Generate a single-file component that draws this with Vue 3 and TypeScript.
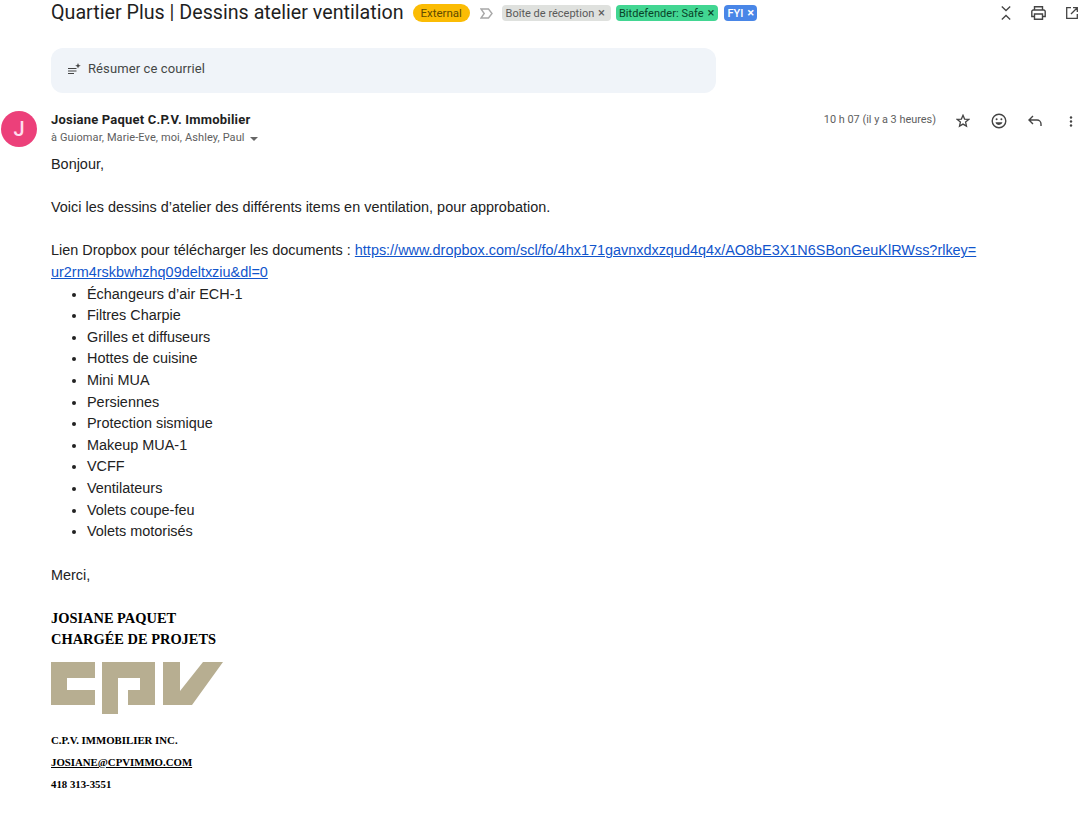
<script setup lang="ts">
const items: string[] = [
  'Échangeurs d’air ECH-1', 'Filtres Charpie', 'Grilles et diffuseurs', 'Hottes de cuisine',
  'Mini MUA', 'Persiennes', 'Protection sismique', 'Makeup MUA-1', 'VCFF', 'Ventilateurs',
  'Volets coupe-feu', 'Volets motorisés',
]
</script>

<template>
  <div class="page">
    <header class="subject-row">
      <h1 class="subject">Quartier Plus | Dessins atelier ventilation</h1>
      <span class="external">External</span>
      <svg class="imp" width="13" height="11" viewBox="0 0 13 11"><path d="M1 1h7.500l3.500 4.500L8.500 10H1l3.200-4.500z" fill="none" stroke="#a8a8a8" stroke-width="1.400"/></svg>
      <span class="tag grey">Boîte de réception <i>×</i></span>
      <span class="tag green">Bitdefender: Safe <i>×</i></span>
      <span class="tag blue">FYI <i>×</i></span>
      <div class="top-icons">
        <span class="tbox"><svg width="10" height="14" viewBox="0 0 10 14"><path d="M.8.500L5 4.500 9.200.500M.8 13.500L5 9.500l4.200 4" fill="none" stroke="#444" stroke-width="1.300"/></svg></span>
        <span class="tbox"><svg width="15" height="14" viewBox="0 0 15 14"><path d="M3.500 4V.8h8V4M3.500 10.500H.8V5.500A1.500 1.500 0 0 1 2.300 4h10.400a1.500 1.500 0 0 1 1.500 1.500v5h-2.700M3.500 8h8v5.200h-8z" fill="none" stroke="#444" stroke-width="1.400"/></svg></span>
        <span class="tbox"><svg width="12" height="12" viewBox="0 0 12 12"><path d="M5 .7H.7v10.600h10.600V7M7 .7h4.300V5M11.300.7L5 7" fill="none" stroke="#444" stroke-width="1.300"/></svg></span>
      </div>
    </header>

    <div class="summary">
      <svg width="13" height="12" viewBox="0 0 13 12"><path d="M0 5.500h8.500M0 8h8.500M0 10.500h6" stroke="#444" stroke-width="1"/><path d="M10 0l.8 2 2 .8-2 .8-.8 2-.8-2-2-.8 2-.8z" fill="#444"/></svg>
      <span>Résumer ce courriel</span>
    </div>

    <section class="message-head">
      <div class="avatar">J</div>
      <div class="who">
        <div class="sender">Josiane Paquet C.P.V. Immobilier</div>
        <div class="recipients">à Guiomar, Marie-Eve, moi, Ashley, Paul<b class="caret"></b></div>
      </div>
      <div class="meta">
        <span class="time">10 h 07 (il y a 3 heures)</span>
        <span class="ibox"><svg width="14" height="14" viewBox="0 0 14 14"><path d="M7 1.300l1.600 3.800 4.100.3-3.100 2.700.9 4L7 10.100l-3.500 2 .9-4-3.100-2.700 4.100-.3z" fill="none" stroke="#444" stroke-width="1.300"/></svg></span>
        <span class="ibox"><svg width="16" height="16" viewBox="0 0 16 16"><circle cx="8" cy="8" r="6.800" fill="none" stroke="#444" stroke-width="1.400"/><circle cx="5.600" cy="6.200" r="1" fill="#444"/><circle cx="10.400" cy="6.200" r="1" fill="#444"/><path d="M4.500 9.300h7A3.600 3.600 0 0 1 8 12a3.600 3.600 0 0 1-3.500-2.700z" fill="#444"/></svg></span>
        <span class="ibox"><svg width="14" height="12" viewBox="0 0 14 12"><path d="M5 1L1 5l4 4M1 5h8a4 4 0 0 1 4 4v2" fill="none" stroke="#444" stroke-width="1.400"/></svg></span>
        <span class="ibox"><svg width="4" height="11" viewBox="0 0 4 11"><circle cx="2" cy="1.500" r="1.200" fill="#444"/><circle cx="2" cy="5.500" r="1.200" fill="#444"/><circle cx="2" cy="9.500" r="1.200" fill="#444"/></svg></span>
      </div>
    </section>

    <article class="body">
      <p>Bonjour,</p>
      <p class="blank">&nbsp;</p>
      <p>Voici les dessins d’atelier des différents items en ventilation, pour approbation.</p>
      <p class="blank">&nbsp;</p>
      <p>Lien Dropbox pour télécharger les documents : <a>https://www.dropbox.com/scl/fo/4hx171gavnxdxzqud4q4x/AO8bE3X1N6SBonGeuKlRWss?rlkey=<br>ur2rm4rskbwhzhq09deltxziu&amp;dl=0</a></p>
      <ul>
        <li v-for="item in items" :key="item">{{ item }}</li>
      </ul>
      <p class="blank">&nbsp;</p>
      <p>Merci,</p>
      <p class="blank">&nbsp;</p>
      <div class="sig-name">JOSIANE PAQUET<br>CHARGÉE DE PROJETS</div>
      <svg class="logo" width="173" height="55" viewBox="0 0 173 55">
        <path fill="#b7ae91" d="M0 1h44v16H16v12h28v15H0zM51 1h53v43H77V29h12V17H67v36H51zM112 1h17v29L152 1h20l-31 43h-29z"/>
      </svg>
      <div class="sig-small">C.P.V. IMMOBILIER INC.</div>
      <div class="sig-small"><u>JOSIANE@CPVIMMO.COM</u></div>
      <div class="sig-small">418 313-3551</div>
    </article>
  </div>
</template>

<style scoped>
.page { width: 1090px; height: 813px; overflow: hidden; background: #fff; box-sizing: border-box; font-family: Roboto, "Liberation Sans", sans-serif; color: #1f1f1f; }
.subject-row { height: 26px; display: flex; align-items: center; padding: 0 2px 0 51px; }
.subject { margin: 0 9px 0 0; font: 400 19.700px/26px Roboto, sans-serif; color: #1f1f1f; white-space: nowrap; }
.external { background: #fbbc04; color: #5f4b00; border-radius: 9px; height: 18px; line-height: 18px; width: 57px; font-size: 11.500px; text-align: center; flex: none; }
.imp { margin: 0 9px 0 10px; flex: none; }
.tag { height: 16px; line-height: 16px; border-radius: 4px; font-size: 11px; padding: 0 3px 0 4px; margin-right: 5px; white-space: nowrap; }
.tag i { font-style: normal; font-size: 13px; margin-left: 1px; }
.grey { background: #dfe1de; color: #5a5a5a; padding-right: 6px; }
.green { background: #42d692; color: #094228; padding-left: 3px; letter-spacing: .05px; margin-right: 6px; }
.blue { background: #4986e7; color: #fff; font-weight: 500; }
.top-icons { margin-left: auto; display: flex; align-items: center; }
.tbox { width: 33px; height: 26px; display: flex; align-items: center; justify-content: center; }
.summary { margin: 22px 0 0 51px; width: 665px; height: 45px; box-sizing: border-box; background: #f0f4f9; border-radius: 12px; display: flex; align-items: center; gap: 7px; padding: 0 0 4px 17px; font-size: 13px; color: #444746; letter-spacing: .1px; }
.message-head { display: flex; margin-top: 15px; height: 46px; padding-right: 1px; }
.avatar { width: 36px; height: 36px; margin: 3px 0 0 1px; border-radius: 50%; background: #ec407a; color: #fde; font-size: 20px; font-weight: 500; text-align: center; line-height: 36px; flex: none; }
.who { margin-left: 14px; }
.sender { font-size: 13px; font-weight: 700; line-height: 20px; margin-top: 2px; letter-spacing: .2px; }
.recipients { font-size: 11px; line-height: 16px; color: #5e5e5e; display: flex; align-items: center; gap: 5px; white-space: pre; letter-spacing: .1px; }
.caret { width: 0; height: 0; border: 4.500px solid transparent; border-top-color: #666; border-bottom: 0; margin-top: 1px; }
.meta { margin-left: auto; display: flex; align-items: flex-start; }
.time { font-size: 10.900px; line-height: 16px; color: #5e5e5e; margin: 4px 9px 0 0; }
.ibox { width: 36px; height: 18px; margin-top: 4px; display: flex; align-items: center; justify-content: center; }
.body { margin: 0 0 0 51px; font-family: "Liberation Sans", Arial, sans-serif; font-size: 14.430px; line-height: 21.600px; color: #222; }
.body p { margin: 0; }
a { color: #1155cc; text-decoration: underline; }
ul { margin: 0 0 .4px; padding: 0 0 0 36px; }
.sig-name { font: 700 14.430px/21px "Liberation Serif", serif; color: #000; margin-top: .6px; }
.logo { display: block; margin-top: 11px; }
.sig-small { font: 700 10.800px/21.600px "Liberation Serif", serif; color: #000; }
.logo + .sig-small { margin-top: 14px; }
</style>
